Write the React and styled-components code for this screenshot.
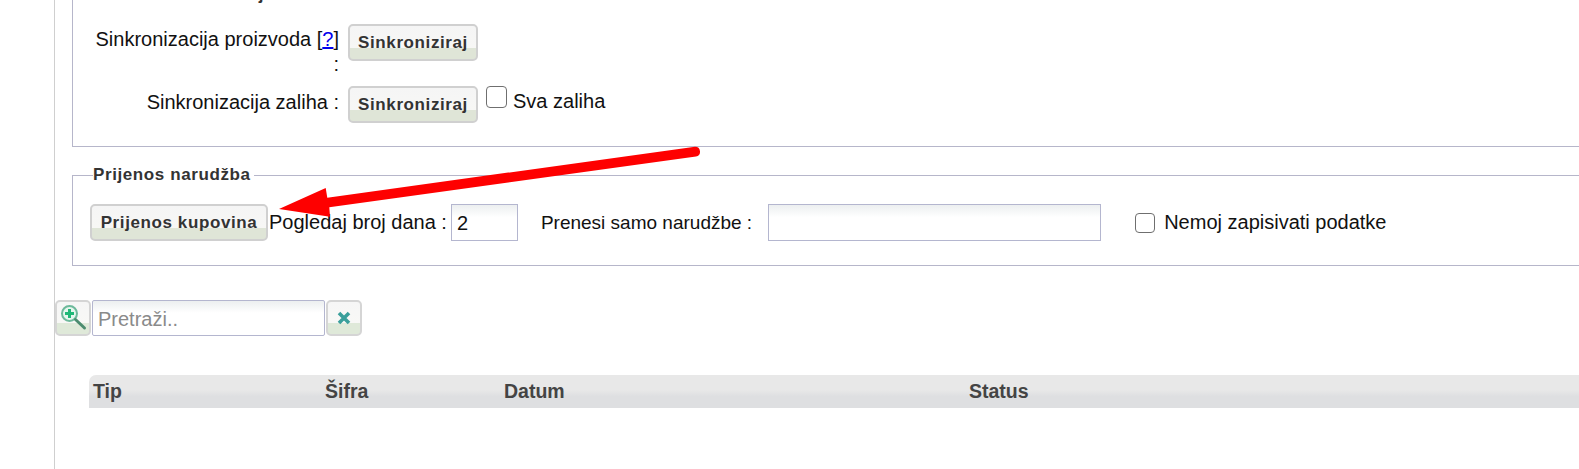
import React from 'react'
import styled, { createGlobalStyle } from 'styled-components'

const Global = createGlobalStyle`
  html, body { margin: 0; padding: 0; background: #fff; height: 469px; overflow: hidden; }
  body { font-family: "Liberation Sans", Arial, sans-serif; font-size: 20px; color: #111; }
`

const App = () => {
  return (
    <Page>
      <Global />
      <Gutter />
      <Main>
        <Box>
          <BoxTitle>Ručna sinkronizacija</BoxTitle>
          <SyncRow>
            <SyncLabel>Sinkronizacija proizvoda [<a href="#help">?</a>] :</SyncLabel>
            <Button>Sinkroniziraj</Button>
          </SyncRow>
          <SyncRow second>
            <SyncLabel $top={4}>Sinkronizacija zaliha :</SyncLabel>
            <Button>Sinkroniziraj</Button>
            <CheckLabel>
              <Check type="checkbox" />
              <span>Sva zaliha</span>
            </CheckLabel>
          </SyncRow>
        </Box>

        <Box transfer>
          <BoxTitle>Prijenos narudžba</BoxTitle>
          <TransferRow>
            <Button wide>Prijenos kupovina</Button>
            <FieldLabel>Pogledaj broj dana :</FieldLabel>
            <TextInput $w={67} defaultValue="2" />
            <OrderLabel>Prenesi samo narudžbe :</OrderLabel>
            <TextInput $w={333} />
            <NoWriteLabel>
              <SmallCheck type="checkbox" />
              Nemoj zapisivati podatke
            </NoWriteLabel>
          </TransferRow>
        </Box>

        <SearchBar>
          <IconButton aria-label="Traži">
            <svg width="32" height="32" viewBox="0 0 32 32">
              <circle cx="12.5" cy="11.5" r="7.5" fill="#e6f6ee" stroke="#6db99b" strokeWidth="2" />
              <path d="M12.5 7v9M8 11.5h9" stroke="#1fb877" strokeWidth="3" />
              <path d="M18.5 17.5l9 8.5" stroke="#4c8c70" strokeWidth="3" strokeLinecap="round" />
            </svg>
          </IconButton>
          <SearchInput placeholder="Pretraži.." />
          <IconButton aria-label="Očisti">
            <svg width="20" height="18" viewBox="0 0 20 18">
              <path d="M5 4l10 10M15 4l-10 10" stroke="#3a9f9b" strokeWidth="3.6" />
            </svg>
          </IconButton>
        </SearchBar>

        <TableHead>
          <span>Tip</span>
          <span>Šifra</span>
          <span>Datum</span>
          <span>Status</span>
        </TableHead>
      </Main>

      <Arrow width="760" height="230" viewBox="0 0 760 230">
        <path
          d="M279 209 L325.7 188 L327.3 197.7 L695 146.7 A5 5 0 0 1 696 156.6 L329.3 207.3 L330 216.7 Z"
          fill="#fe0000"
        />
      </Arrow>
    </Page>
  )
}

export default App

const Page = styled.div`
  position: relative;
  display: flex;
  width: 1579px;
  height: 469px;
  overflow: hidden;
`

const Gutter = styled.div`
  flex: none;
  width: 54px;
  border-right: 1px solid #cfcfcf;
`

const Main = styled.div`
  flex: none;
  width: 1600px;
  margin-top: -14px;
`

const Box = styled.fieldset`
  box-sizing: border-box;
  width: 1600px;
  margin: ${(p) => (p.transfer ? '19px' : '0')} 0 0 17px;
  padding: 0 0 0 17px;
  height: ${(p) => (p.transfer ? '100px' : '161px')};
  border: 1px solid #b6b6ca;
  border-right: 0;
`

const BoxTitle = styled.legend`
  margin-left: 3px;
  padding: 0 3px 0 0;
  font-size: 17px;
  line-height: 18px;
  font-weight: 700;
  letter-spacing: 0.6px;
  color: #333;
`

const SyncRow = styled.div`
  display: flex;
  align-items: flex-start;
  margin-top: ${(p) => (p.second ? '9px' : '20px')};
`

const SyncLabel = styled.div`
  box-sizing: border-box;
  width: 249px;
  padding: ${(p) => p.$top || 3}px 0 0 5px;
  text-align: right;
  line-height: 25px;
  color: #111;
  a { color: #0000ee; }
`

const Button = styled.button`
  box-sizing: border-box;
  flex: none;
  height: 37px;
  width: ${(p) => (p.wide ? '178px' : '130px')};
  margin: ${(p) => (p.wide ? '0' : '0 0 0 9px')};
  padding: 0;
  border: 2px solid #d0d0d0;
  border-radius: 5px;
  background: linear-gradient(#f5f5f5 0, #f7f7f5 66%, #dfe5d7 66%, #dfe5d7 100%);
  font-family: inherit;
  font-size: 17px;
  font-weight: 700;
  letter-spacing: 0.6px;
  color: #333;
`

const CheckLabel = styled.label`
  display: flex;
  align-items: flex-start;
  margin-left: 8px;
  color: #111;
  span { padding-top: 4px; line-height: 23px; }
`

const Check = styled.input`
  appearance: none;
  flex: none;
  width: 21px;
  height: 22px;
  margin: 0 6px 0 0;
  border: 1.5px solid #6f6f6f;
  border-radius: 4px;
  background: #fff;
`

const TransferRow = styled.div`
  display: flex;
  align-items: center;
  margin: 20px 0 0 0;
  height: 37px;
`

const FieldLabel = styled.span`
  margin: 0 4px 0 1px;
  white-space: nowrap;
  color: #111;
`

const OrderLabel = styled(FieldLabel)`
  margin: 0 16px 0 23px;
  font-size: 19px;
`

const TextInput = styled.input`
  box-sizing: border-box;
  width: ${(p) => p.$w}px;
  height: 37px;
  padding: 2px 5px 0;
  border: 1px solid #b4b6cf;
  background: linear-gradient(#eceff0 0, #fff 35%);
  font-family: inherit;
  font-size: 20px;
  color: #111;
  outline: none;
`

const NoWriteLabel = styled.label`
  display: flex;
  align-items: center;
  margin-left: 34px;
  white-space: nowrap;
  color: #111;
`

const SmallCheck = styled(Check)`
  width: 20px;
  height: 20px;
  margin: 0 9px 0 0;
`

const SearchBar = styled.div`
  display: flex;
  align-items: stretch;
  gap: 1px;
  height: 36px;
  margin: 34px 0 0 0;
`

const IconButton = styled.button`
  box-sizing: border-box;
  display: flex;
  align-items: center;
  justify-content: center;
  width: 36px;
  padding: 0;
  border: 2px solid #d5d5d5;
  border-radius: 5px;
  background: linear-gradient(#f6f6f6 0, #f8f8f6 66%, #dfe9d9 66%, #dfe9d9 100%);
`

const SearchInput = styled.input`
  box-sizing: border-box;
  width: 233px;
  padding: 2px 5px 0;
  border: 1px solid #b4b6cf;
  border-radius: 2px;
  background: linear-gradient(#eceff0 0, #fff 35%);
  font-family: inherit;
  font-size: 20px;
  outline: none;
  &::placeholder { color: #8a8a8a; opacity: 1; }
`

const TableHead = styled.div`
  display: grid;
  grid-template-columns: 232px 179px 465px 1fr;
  align-items: center;
  box-sizing: border-box;
  height: 33px;
  margin: 39px 0 0 34px;
  padding-left: 4px;
  border-radius: 7px 0 0 0;
  background: linear-gradient(#e8e8e8 0, #e8e8e8 45%, #dedfe1 65%, #dedfe1 100%);
  font-size: 19.5px;
  font-weight: 700;
  color: #444;
`

const Arrow = styled.svg`
  position: absolute;
  left: 0;
  top: 0;
  pointer-events: none;
`
